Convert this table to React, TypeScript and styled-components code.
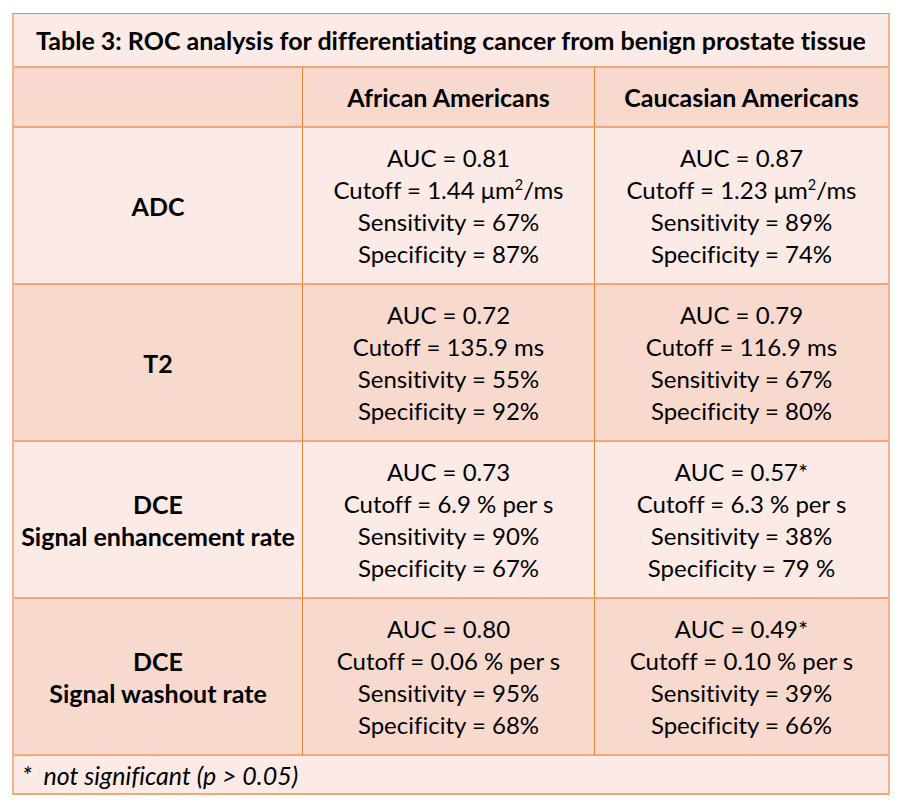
import React from "react";
import styled, { createGlobalStyle } from "styled-components";

const Global = createGlobalStyle`
  html, body { margin: 0; padding: 0; background: #ffffff; }
  *, *::before, *::after { box-sizing: border-box; }
  body {
    font-family: Lato, "Open Sans", sans-serif;
    color: #000;
    font-variant-ligatures: none;
  }
`;

const Page = styled.div`
  padding: 13px 0 0 12px;
`;

const Table = styled.div`
  width: 878px;
  display: grid;
  grid-template-columns: 288px 292px 294px;
  border-top: 1px solid #ef8a3f;
  border-left: 2px solid #f6b288;
  border-right: 2px solid #f6b288;
  border-bottom: 2px solid #f4a67a;
`;

const Title = styled.div`
  grid-column: 1 / 4;
  height: 54px;
  display: flex;
  align-items: center;
  justify-content: center;
  background: #fbeae6;
  font-weight: 700;
  font-size: 25px;
  border-bottom: 2px solid #f4a67a;
  white-space: nowrap;
`;

const Cell = styled.div<{ $dark?: boolean; $bold?: boolean; $first?: boolean; $h: number }>`
  height: ${(p) => p.$h}px;
  display: flex;
  flex-direction: column;
  align-items: center;
  justify-content: center;
  background: ${(p) => (p.$dark ? "#f8d9ce" : "#fbeae6")};
  font-weight: ${(p) => (p.$bold ? 700 : 400)};
  font-size: ${(p) => (p.$bold ? 25 : 24)}px;
  line-height: 32px;
  border-bottom: 2px solid #f4a67a;
  border-left: ${(p) => (p.$first ? "none" : "1px solid #ee8436")};
  text-align: center;
  white-space: nowrap;
`;

const Foot = styled.div`
  grid-column: 1 / 4;
  height: 37px;
  display: flex;
  align-items: center;
  padding-left: 8px;
  background: #fbeae6;
  font-size: 25px;
  font-style: italic;
  white-space: pre;
`;

const Sup = styled.sup`
  font-size: 0.6em;
  line-height: 0;
`;

const Line = styled.div``;

const rows = [
  {
    label: ["ADC"],
    a: ["AUC = 0.81", <>Cutoff = 1.44 μm<Sup>2</Sup>/ms</>, "Sensitivity = 67%", "Specificity = 87%"],
    c: ["AUC = 0.87", <>Cutoff = 1.23 μm<Sup>2</Sup>/ms</>, "Sensitivity = 89%", "Specificity = 74%"],
  },
  {
    label: ["T2"],
    a: ["AUC = 0.72", "Cutoff = 135.9 ms", "Sensitivity = 55%", "Specificity = 92%"],
    c: ["AUC = 0.79", "Cutoff = 116.9 ms", "Sensitivity = 67%", "Specificity = 80%"],
  },
  {
    label: ["DCE", "Signal enhancement rate"],
    a: ["AUC = 0.73", "Cutoff = 6.9 % per s", "Sensitivity = 90%", "Specificity = 67%"],
    c: ["AUC = 0.57*", "Cutoff = 6.3 % per s", "Sensitivity = 38%", "Specificity = 79 %"],
  },
  {
    label: ["DCE", "Signal washout rate"],
    a: ["AUC = 0.80", "Cutoff = 0.06 % per s", "Sensitivity = 95%", "Specificity = 68%"],
    c: ["AUC = 0.49*", "Cutoff = 0.10 % per s", "Sensitivity = 39%", "Specificity = 66%"],
  },
];

export default function App() {
  return (
    <Page>
      <Global />
      <Table>
        <Title>Table 3: ROC analysis for differentiating cancer from benign prostate tissue</Title>
        <Cell $dark $bold $first $h={60} />
        <Cell $dark $bold $h={60}>African Americans</Cell>
        <Cell $dark $bold $h={60}>Caucasian Americans</Cell>
        {rows.map((r, i) => {
          const dark = i % 2 === 1;
          return (
            <React.Fragment key={i}>
              <Cell $dark={dark} $bold $first $h={157}>
                {r.label.map((l, j) => (
                  <Line key={j}>{l}</Line>
                ))}
              </Cell>
              <Cell $dark={dark} $h={157}>
                {r.a.map((l, j) => (
                  <Line key={j}>{l}</Line>
                ))}
              </Cell>
              <Cell $dark={dark} $h={157}>
                {r.c.map((l, j) => (
                  <Line key={j}>{l}</Line>
                ))}
              </Cell>
            </React.Fragment>
          );
        })}
        <Foot>{"*  not significant (p > 0.05)"}</Foot>
      </Table>
    </Page>
  );
}
